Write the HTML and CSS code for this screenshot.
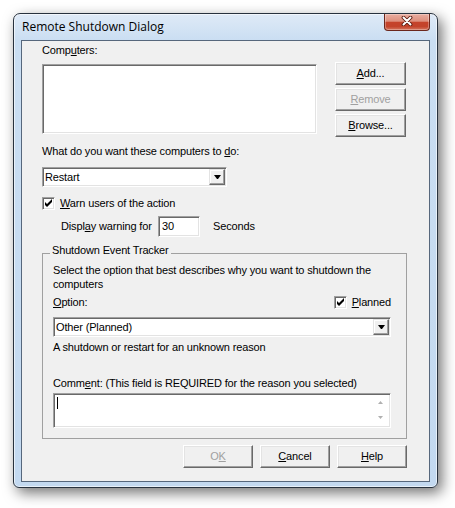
FILE: index.html
```html
<!DOCTYPE html>
<html>
<head>
<meta charset="utf-8">
<title>Remote Shutdown Dialog</title>
<link rel="stylesheet" href="styles.css">
</head>
<body>
<div class="stage">
  <div class="window">
    <div class="titlebar">
      <span class="title">Remote Shutdown Dialog</span>
      <div class="close">
        <svg width="12" height="10" viewBox="0 0 12 10">
          <path d="M2.5 1.5 L9.5 8.5 M9.5 1.5 L2.5 8.5" stroke="#5b1b10" stroke-width="3.8" stroke-linecap="round" fill="none"/>
          <path d="M2.5 1.5 L9.5 8.5 M9.5 1.5 L2.5 8.5" stroke="#ffffff" stroke-width="2" stroke-linecap="round" fill="none"/>
        </svg>
      </div>
    </div>
    <div class="client">
      <div class="top-row">
        <div class="computers">
          <div class="label">Comp<u>u</u>ters:</div>
          <div class="listbox sunken"></div>
        </div>
        <div class="side-buttons">
          <div class="btn side"><span><u>A</u>dd...</span></div>
          <div class="btn side disabled"><span><u>R</u>emove</span></div>
          <div class="btn side"><span><u>B</u>rowse...</span></div>
        </div>
      </div>

      <div class="action-label">What do you want these computers to <u>d</u>o:</div>
      <div class="combo sunken action-combo">
        <span class="combo-text">Restart</span>
        <span class="drop"><svg width="7" height="4" viewBox="0 0 7 4"><polygon points="0,0 7,0 4,4 3,4" fill="#000"/></svg></span>
      </div>

      <div class="check-row warn-row">
        <span class="checkbox sunken"><svg width="9" height="9" viewBox="0 0 9 9"><path d="M1 3 L3 5 L8 0 L8 3 L3 8 L1 6 Z" fill="#000"/></svg></span>
        <span><u>W</u>arn users of the action</span>
      </div>

      <div class="delay-row">
        <span class="delay-label">Displ<u>a</u>y warning for</span>
        <span class="textbox sunken">30</span>
        <span class="seconds">Seconds</span>
      </div>

      <fieldset class="group">
        <legend>Shutdown Event Tracker</legend>
        <p class="desc">Select the option that best describes why you want to shutdown the<br>computers</p>
        <div class="option-row">
          <span><u>O</u>ption:</span>
          <span class="check-row">
            <span class="checkbox sunken"><svg width="9" height="9" viewBox="0 0 9 9"><path d="M1 3 L3 5 L8 0 L8 3 L3 8 L1 6 Z" fill="#000"/></svg></span>
            <span><u>P</u>lanned</span>
          </span>
        </div>
        <div class="combo sunken wide-combo">
          <span class="combo-text">Other (Planned)</span>
          <span class="drop"><svg width="7" height="4" viewBox="0 0 7 4"><polygon points="0,0 7,0 4,4 3,4" fill="#000"/></svg></span>
        </div>
        <div class="reason">A shutdown or restart for an unknown reason</div>
        <div class="comment-label">Comm<u>e</u>nt: (This field is REQUIRED for the reason you selected)</div>
        <div class="comment sunken">
          <span class="caret"></span>
          <span class="scroll">
            <svg width="5" height="3" viewBox="0 0 5 3"><polygon points="0,3 5,3 2.5,0" fill="#b0b0b0"/></svg>
            <svg width="5" height="3" viewBox="0 0 5 3"><polygon points="0,0 5,0 2.5,3" fill="#b0b0b0"/></svg>
          </span>
        </div>
      </fieldset>

      <div class="bottom-buttons">
        <div class="btn bottom disabled"><span>O<u>K</u></span></div>
        <div class="btn bottom"><span><u>C</u>ancel</span></div>
        <div class="btn bottom"><span><u>H</u>elp</span></div>
      </div>
    </div>
  </div>
</div>
</body>
</html>
```

FILE: styles.css
```css
* { box-sizing: border-box; }

html, body {
  margin: 0;
  padding: 0;
  background: #ffffff;
}

body {
  width: 455px;
  height: 508px;
  overflow: hidden;
  font-family: "Liberation Sans", Arial, sans-serif;
  font-size: 11px;
  line-height: 13px;
  letter-spacing: -0.15px;
  color: #000;
}

u { text-decoration: underline; text-underline-offset: 1px; }

.stage {
  padding: 13px 0 0 13px;
}

.window {
  width: 425px;
  height: 475px;
  border: 1px solid #28323e;
  border-radius: 7px 7px 6px 6px;
  background: linear-gradient(to bottom, #dfeaf7 0px, #cadef2 26px, #c3d9f0 100%);
  box-shadow: 4px 5px 14px rgba(0, 0, 0, 0.55), inset 0 0 0 1px rgba(255, 255, 255, 0.6);
  padding: 0 7px 5px 7px;
  display: flex;
  flex-direction: column;
}

.titlebar {
  flex: none;
  height: 26px;
  display: flex;
  justify-content: space-between;
  align-items: flex-start;
}

.title {
  font-family: "Open Sans", "Noto Sans", sans-serif;
  font-size: 12px;
  line-height: 16px;
  letter-spacing: 0;
  margin: 5px 0 0 1px;
  color: #000;
}

.close {
  width: 46px;
  height: 17px;
  border: 1px solid #6b271c;
  border-top: none;
  border-radius: 0 0 4px 4px;
  background: linear-gradient(to bottom, #eaada0 0%, #dd8f7d 45%, #c5432b 52%, #c3432b 78%, #d5765f 100%);
  box-shadow: inset 0 0 0 1px rgba(255, 255, 255, 0.3);
  display: flex;
  justify-content: center;
  align-items: flex-start;
  padding-top: 2px;
}

.close svg { display: block; }

.client {
  flex: 1;
  background: #f0f0f0;
  border: 1px solid #56677c;
  padding: 3px 0 0 20px;
}

.sunken {
  background: #fff;
  border: 1px solid;
  border-color: #a0a0a0 #ffffff #ffffff #a0a0a0;
  box-shadow: inset 1px 1px 0 #696969, inset -1px -1px 0 #e3e3e3;
}

.btn {
  height: 23px;
  border: 1px solid;
  border-color: #ffffff #696969 #696969 #ffffff;
  box-shadow: inset -1px -1px 0 #a0a0a0, inset 1px 1px 0 #e3e3e3;
  background: #f0f0f0;
  display: flex;
  align-items: center;
  justify-content: center;
}

.btn.disabled { color: #a0a0a0; }

.top-row {
  display: flex;
  align-items: flex-start;
}

.listbox {
  width: 275px;
  height: 70px;
  margin-top: 7px;
}

.side-buttons {
  margin: 18px 0 0 18px;
  display: flex;
  flex-direction: column;
  gap: 3px;
}

.btn.side { width: 71px; }

.action-label { margin-top: 8px; }

.combo {
  height: 20px;
  padding: 1px;
  display: flex;
  align-items: center;
}

.combo-text {
  flex: 1;
  padding-left: 1px;
  white-space: nowrap;
}

.drop {
  width: 16px;
  height: 16px;
  border: 1px solid;
  border-color: #e3e3e3 #696969 #696969 #e3e3e3;
  box-shadow: inset -1px -1px 0 #a0a0a0, inset 1px 1px 0 #ffffff;
  background: #f0f0f0;
  display: flex;
  align-items: center;
  justify-content: center;
}

.drop svg { display: block; }

.action-combo {
  width: 185px;
  margin-top: 9px;
}

.check-row {
  display: flex;
  align-items: center;
  gap: 5px;
}

.checkbox {
  width: 13px;
  height: 13px;
  flex: none;
  display: flex;
  align-items: center;
  justify-content: center;
}

.checkbox svg { display: block; }

.warn-row { margin-top: 10px; }

.delay-row {
  margin: 6px 0 0 19px;
  display: flex;
  align-items: center;
}

.delay-label { width: 97px; }

.textbox {
  width: 42px;
  height: 21px;
  padding-left: 3px;
  display: flex;
  align-items: center;
}

.seconds { margin-left: 13px; }

.group {
  width: 365px;
  min-width: 0;
  margin: 7px 0 0 0;
  padding: 0 15px 10px 10px;
  border: 1px solid #a0a0a0;
}

.group legend {
  padding: 0 2px 6px 2px;
  margin-left: -3px;
  line-height: 13px;
}

.desc {
  margin: 0;
  line-height: 14px;
  white-space: nowrap;
}

.option-row {
  margin-top: 5px;
  height: 13px;
  display: flex;
  justify-content: space-between;
  align-items: center;
}

.wide-combo { margin-top: 8px; }

.reason { margin-top: 4px; }

.comment-label {
  margin-top: 23px;
  white-space: nowrap;
}

.comment {
  margin-top: 3px;
  height: 35px;
  padding: 2px;
  display: flex;
  justify-content: space-between;
}

.caret {
  width: 1px;
  height: 12px;
  margin: 1px 0 0 1px;
  background: #000;
}

.scroll {
  width: 16px;
  display: flex;
  flex-direction: column;
  align-items: center;
  justify-content: space-between;
  padding: 5px 0 6px 0;
}

.scroll svg { display: block; }

.bottom-buttons {
  margin-top: 6px;
  padding-right: 22px;
  display: flex;
  justify-content: flex-end;
  gap: 7px;
}

.btn.bottom { width: 70px; }
```
